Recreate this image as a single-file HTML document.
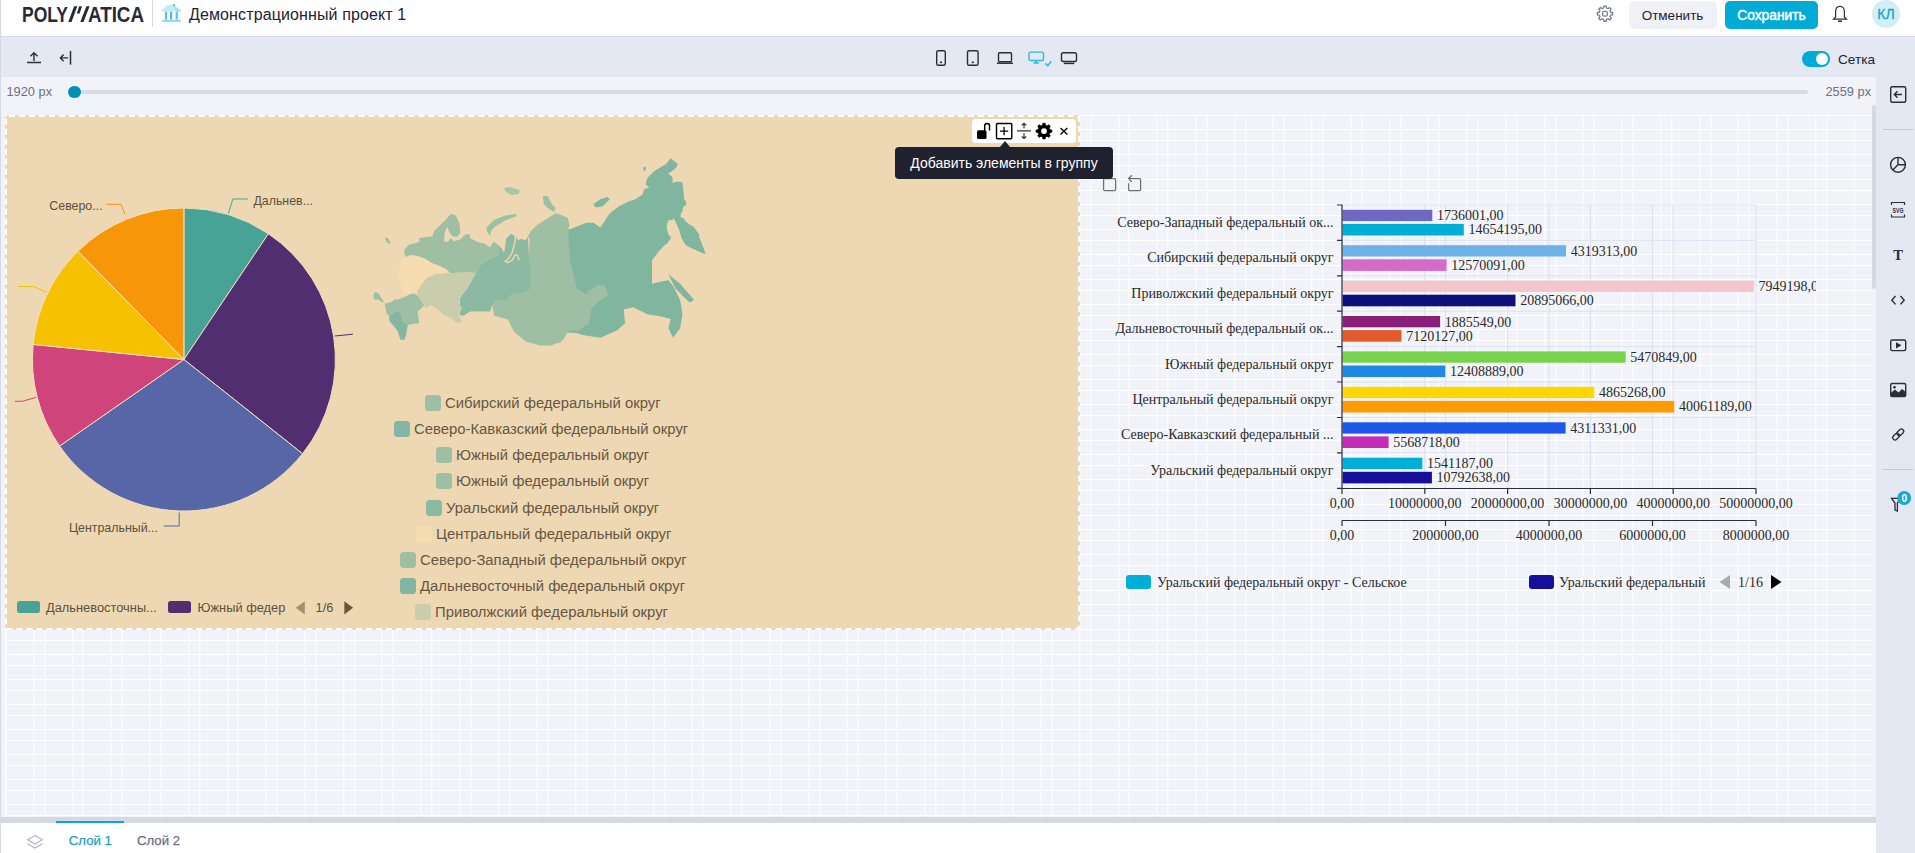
<!DOCTYPE html>
<html><head><meta charset="utf-8">
<style>
*{box-sizing:border-box;margin:0;padding:0}
html,body{width:1915px;height:853px;overflow:hidden;background:#fff;font-family:"Liberation Sans",sans-serif;position:relative}
.a{position:absolute}
#hdr{left:0;top:0;width:1915px;height:37px;background:#fff;border-bottom:1px solid #d6dae8}
#lb{left:0;top:0;width:1px;height:853px;background:#d5d9e6;z-index:50}
#tb{left:0;top:37px;width:1915px;height:40px;background:#e4e8f3}
#sb{left:1876px;top:77px;width:39px;height:776px;background:#e4e8f3}
#rul{left:1px;top:77px;width:1875px;height:38px;background:#f1f3f8}
#cv{left:1px;top:115px;width:1871px;height:702px;background:#f1f3f8}
#grid{left:5px;top:115px;width:1867px;height:702px;
 background-image:repeating-linear-gradient(to bottom,#fff 0,#fff 1px,transparent 1px,transparent 14px,#fff 14px,#fff 15px,transparent 15px,transparent 25px)}
#gridv{left:5px;top:115px;width:1850px;height:702px;background-position:0.35px 0;
 background-image:repeating-linear-gradient(to right,#fff 0,#fff 1px,transparent 1px,transparent 27.8px,#fff 27.8px,#fff 28.8px,transparent 28.8px,transparent 38.74px)}
#hsb{left:1px;top:817px;width:1875px;height:6px;background:#d5d9e6}
#bot{left:1px;top:823px;width:1875px;height:30px;background:#fff}
</style></head><body>
<div id="lb" class="a"></div>
<div id="hdr" class="a">
 <svg class="a" style="left:0;top:0" width="150" height="30" viewBox="0 0 150 30"><g fill="#262a38" font-family="Liberation Sans" font-weight="bold" font-size="21.5"><text x="22" y="22" textLength="46" lengthAdjust="spacingAndGlyphs">POLY</text><text x="88" y="22" textLength="56" lengthAdjust="spacingAndGlyphs">ATICA</text></g><path d="M68.3 22 L74.1 6.3 L77.3 6.3 L71.5 22Z M76.8 13.6 L79.2 6.3 L82 6.3 L79.6 13.6Z M80.3 22 L86.4 6.3 L89.6 6.3 L83.5 22Z" fill="#262a38"/></svg>
 <div class="a" style="left:152px;top:0;width:1px;height:27px;background:#d5d9e6"></div>
 <svg class="a" style="left:156px;top:0px" width="30" height="27" viewBox="0 0 30 27"><path d="M5 10.6 L11 5.5 Q14 4 17 5 L18 4.5 L18.5 5.8 L25 10.4 L24.5 11.5 H5.3Z" fill="#c6ebf5"/><path d="M18.5 5.8 L25 10.4 L24.5 11.5 H20Z" fill="#a3def0"/><rect x="17.2" y="4" width="1.7" height="2.4" fill="#5cc6e2"/><rect x="9" y="11.6" width="1.9" height="8" fill="#4fbfdd"/><rect x="14" y="11.6" width="2.3" height="8" fill="#4fbfdd"/><rect x="19.6" y="11.6" width="2.3" height="8" fill="#5ac8e4"/><rect x="6.2" y="19.8" width="18.6" height="2" fill="#8ad6ea"/></svg>
 <div class="a" style="left:189px;top:6px;font-size:16px;letter-spacing:0.12px;color:#1f2233;white-space:nowrap">Демонстрационный проект 1</div>
 <svg class="a" style="left:1590px;top:0px" width="30" height="30" viewBox="0 0 30 30" fill="none" stroke="#777c96" stroke-width="1.3" stroke-linejoin="round"><path d="M13.57 7.98 L13.80 6.09 L16.20 6.09 L16.43 7.98 L18.04 8.64 L19.53 7.47 L21.23 9.17 L20.06 10.66 L20.72 12.27 L22.61 12.50 L22.61 14.90 L20.72 15.13 L20.06 16.74 L21.23 18.23 L19.53 19.93 L18.04 18.76 L16.43 19.42 L16.20 21.31 L13.80 21.31 L13.57 19.42 L11.96 18.76 L10.47 19.93 L8.77 18.23 L9.94 16.74 L9.28 15.13 L7.39 14.90 L7.39 12.50 L9.28 12.27 L9.94 10.66 L8.77 9.17 L10.47 7.47 L11.96 8.64Z"/><rect x="12.6" y="11.3" width="4.8" height="4.8" rx="1.7"/></svg>
 <div class="a" style="left:1629px;top:1px;width:88px;height:28px;border-radius:5px;background:#eff1f6;color:#1f2233;font-size:13.5px;line-height:30px;height:28px;text-indent:-1px;text-align:center">Отменить</div>
 <div class="a" style="left:1725px;top:1px;width:93px;height:28px;border-radius:5px;background:#00acd6;color:#fff;font-size:13.8px;-webkit-text-stroke:0.45px #fff;line-height:30px;height:28px;text-align:center">Сохранить</div>
 <svg class="a" style="left:1832px;top:5px" width="16" height="18" viewBox="0 0 16 18" fill="none" stroke="#2a2d3a" stroke-width="1.2"><path d="M8 1.3 C4.8 1.3 3.6 4 3.6 7 V12 L1.5 14.2 H14.5 L12.4 12 V7 C12.4 4 11.2 1.3 8 1.3Z"/><path d="M6.6 16.3 H9.4" stroke-width="1.6" stroke-linecap="round"/></svg>
 <div class="a" style="left:1872px;top:0;width:28px;height:28px;border-radius:50%;background:#d4eef6;color:#1aa3cc;font-size:14px;-webkit-text-stroke:0.3px #1aa3cc;line-height:29px;text-align:center">КЛ</div>
</div>
<div id="tb" class="a">
 <svg class="a" style="left:26px;top:13px" width="16" height="15" viewBox="0 0 16 15" fill="none" stroke="#2a2d3a" stroke-width="1.4"><path d="M8 11 V3 M4.5 6.3 L8 2.8 L11.5 6.3"/><path d="M1 12.5 H15" stroke-width="1.5"/></svg>
 <svg class="a" style="left:58px;top:13px" width="15" height="15" viewBox="0 0 15 15" fill="none" stroke="#2a2d3a" stroke-width="1.4"><path d="M10 7.9 H3 M5.6 4.6 L2.4 7.9 L5.6 11.2"/><path d="M12.5 1 V14.6" stroke-width="1.5"/></svg>
 <svg class="a" style="left:930px;top:11px" width="160" height="24" viewBox="0 0 160 24" fill="none" stroke="#2a2d3a" stroke-width="1.4">
  <rect x="6.7" y="2.7" width="8.6" height="14.6" rx="1.6"/><rect x="10" y="13.5" width="2" height="1.6" fill="#2a2d3a" stroke="none"/>
  <rect x="37.5" y="2.7" width="10.6" height="14.6" rx="1.6"/><rect x="41.8" y="13.5" width="2" height="1.6" fill="#2a2d3a" stroke="none"/>
  <rect x="68.5" y="4.7" width="13" height="9" rx="1"/><path d="M67 15.2 H83" stroke-width="1.5"/>
  <g stroke="#2dbbe0"><rect x="99" y="4.1" width="14.5" height="8.4" rx="1.6"/><path d="M103.6 15 H108.9 M106.2 13 V15" stroke-width="1.6"/><path d="M115.2 15.4 L117.8 17.6 L121.2 13.2" stroke-width="1.5"/></g>
  <rect x="131.5" y="4.7" width="15" height="8.8" rx="1.8"/><path d="M133.8 15.4 H144.3" stroke-width="1.5"/>
 </svg>
 <div class="a" style="left:1802px;top:14px;width:28px;height:16px;border-radius:8px;background:#00acd6"><div class="a" style="left:13.5px;top:2px;width:12px;height:12px;border-radius:50%;background:#fff"></div></div>
 <div class="a" style="left:1838px;top:15px;font-size:13.6px;line-height:16px;color:#1f2233">Сетка</div>
</div>
<div id="rul" class="a">
 <div class="a" style="left:5.5px;top:7px;font-size:12.8px;line-height:15px;color:#6b7083">1920 px</div>
 <div class="a" style="left:73px;top:13px;width:1734px;height:3.5px;border-radius:2px;background:#d7dbe7"></div>
 <div class="a" style="left:67px;top:8.5px;width:12.5px;height:12.5px;border-radius:50%;background:#0091b3"></div>
 <div class="a" style="left:1824.5px;top:7px;font-size:12.8px;line-height:15px;color:#6b7083">2559 px</div>
</div>
<div id="cv" class="a"></div><div id="grid" class="a"></div><div id="gridv" class="a"></div>
<div id="sb" class="a">
 <svg class="a" style="left:0;top:0" width="39" height="450" viewBox="1876 77 39 450" fill="none" stroke="#2a2d3a" stroke-width="1.4">
  <rect x="1890.7" y="86.7" width="15" height="15.6" rx="1.5"/><path d="M1902 94.5 H1894.5 M1897.5 91.3 L1894.3 94.5 L1897.5 97.7"/>
  <path d="M1883 129.5 H1913" stroke="#c2c8de" stroke-width="1"/>
  <circle cx="1898" cy="164.8" r="7.4"/><path d="M1898 157.4 V164.8 H1905.4 M1898 164.8 L1892.8 170"/>
  <path d="M1891.5 205 V202.5 H1904.5 V205 M1891.5 214.5 V217 H1904.5 V214.5" stroke-width="1.2"/>
  <text x="1898" y="213.3" font-family="Liberation Sans" font-weight="bold" font-size="7.5" fill="#2a2d3a" stroke="none" text-anchor="middle" textLength="11" lengthAdjust="spacingAndGlyphs">SVG</text>
  <text x="1898.2" y="260" font-family="Liberation Serif" font-weight="bold" font-size="14.5" fill="#2a2d3a" stroke="none" text-anchor="middle">T</text>
  <path d="M1895.5 296 L1891.8 300.2 L1895.5 304.4 M1900.5 296 L1904.2 300.2 L1900.5 304.4"/>
  <rect x="1890.7" y="340" width="15" height="10.6" rx="1.5"/><path d="M1896 342.2 L1901.5 345.3 L1896 348.4Z" fill="#2a2d3a" stroke="none"/>
  <rect x="1890.7" y="383.5" width="15" height="13" rx="1.5"/><path d="M1890.7 393 L1895 389.5 L1898.5 392.5 L1902 389 L1905.7 392 V396.5 H1890.7Z" fill="#2a2d3a" stroke="none"/><circle cx="1894.5" cy="387.2" r="1.3" fill="#2a2d3a" stroke="none"/>
  <g transform="rotate(-45 1898.2 434.5)" stroke-width="1.25"><rect x="1891.4" y="432.2" width="7.6" height="4.6" rx="2.3"/><rect x="1897.4" y="432.2" width="7.6" height="4.6" rx="2.3"/></g>
  <path d="M1883 469.5 H1913" stroke="#c2c8de" stroke-width="1"/>
  <path d="M1891.5 498.3 H1900.8 L1897.4 503 V511 L1895 510 V503Z" stroke-width="1.3"/>
  <circle cx="1904.2" cy="498" r="7" fill="#1aa9d3" stroke="none"/>
  <text x="1904.2" y="501.6" font-family="Liberation Sans" font-weight="bold" font-size="10" fill="#fff" stroke="none" text-anchor="middle">0</text>
 </svg>
</div>
<div class="a" style="left:1872px;top:105px;width:4px;height:184px;border-radius:2px;background:#d5d9e6;z-index:5"></div>
<div class="a" style="left:1872px;top:115px;width:4px;height:702px;background:#f1f3f8;z-index:4"></div>
<div id="el1" class="a" style="left:5px;top:115px;width:1075px;height:515px;background:#eed8b3;border:2px dashed #fff;border-radius:4px;z-index:10"></div>
<svg class="a" style="left:0;top:0;z-index:11" width="1100" height="640" viewBox="0 0 1100 640">
<path d="M183.9 359.5 L183.90 208.00 A151.5 151.5 0 0 1 268.40 233.75Z" fill="#47a396" stroke="#f3e0bd" stroke-width="1"/>
<path d="M183.9 359.5 L268.40 233.75 A151.5 151.5 0 0 1 302.55 453.71Z" fill="#512e6f" stroke="#f3e0bd" stroke-width="1"/>
<path d="M183.9 359.5 L302.55 453.71 A151.5 151.5 0 0 1 59.57 446.07Z" fill="#5766a6" stroke="#f3e0bd" stroke-width="1"/>
<path d="M183.9 359.5 L59.57 446.07 A151.5 151.5 0 0 1 33.15 344.45Z" fill="#ce447b" stroke="#f3e0bd" stroke-width="1"/>
<path d="M183.9 359.5 L33.15 344.45 A151.5 151.5 0 0 1 77.90 251.26Z" fill="#f5c100" stroke="#f3e0bd" stroke-width="1"/>
<path d="M183.9 359.5 L77.90 251.26 A151.5 151.5 0 0 1 183.90 208.00Z" fill="#f79608" stroke="#f3e0bd" stroke-width="1"/>
<g fill="none" stroke-width="1">
<path d="M228.4 213.5 L232.8 199 H247.8" stroke="#47a396"/>
<path d="M125 214.5 L121 204.3 H106.3" stroke="#f79608"/>
<path d="M46.9 292.5 L33.8 286.5 H18.4" stroke="#f5c100"/>
<path d="M36 397.4 L22.4 401.3 H15" stroke="#ce447b"/>
<path d="M179.2 512.5 V526 H163.7" stroke="#5766a6"/>
<path d="M334.8 336 L352.9 334.2" stroke="#512e6f"/>
</g>
<g font-family="Liberation Sans" font-size="12.4" fill="#5b5040">
<text x="253.4" y="205.3">Дальнев...</text>
<text x="49.3" y="209.8">Северо...</text>
<text x="68.9" y="532">Центральный...</text>
</g>
<rect x="17" y="601" width="23" height="12" rx="2.5" fill="#47a396"/>
<rect x="168" y="601" width="23" height="12" rx="2.5" fill="#512e6f"/>
<g font-family="Liberation Sans" font-size="12.85" fill="#5b5040">
<text x="46" y="611.8">Дальневосточны...</text>
<text x="197.5" y="611.8">Южный федер</text>
<text x="315.5" y="611.8">1/6</text>
</g>
<!--MAP--><g><polygon points="527.8,235.8 535.8,227.9 543.8,223.9 553.7,215.9 558.7,213.9 567.7,217.9 569.7,225.9 563.7,233.8 569.7,231.9 573.7,237.8 571.7,249.8 573.7,263.8 581.7,273.7 585.6,291.7 595.6,287.7 600.0,283.7 600.0,303.7 589.6,305.6 587.6,319.6 581.7,333.6 571.7,329.6 567.7,327.6 563.7,339.6 551.7,345.5 539.8,345.5 525.8,341.5 513.8,331.6 507.9,319.6 493.9,315.6 491.9,301.7 497.9,299.7 505.9,297.7 513.8,293.7 523.8,293.7 529.8,289.7 530.8,269.7 528.8,255.8 529.8,239.8" fill="#9ebfa3"/>
<polygon points="530.0,232.1 537.0,225.1 555.8,213.3 567.5,218.0 568.7,229.8 573.4,234.4 569.9,250.9 573.4,274.3 576.9,288.4 586.3,294.3 596.9,282.5 607.4,283.7 610.9,299.0 591.0,309.5 588.6,323.6 579.3,333.0 567.5,333.0 560.5,342.4 548.8,344.7 537.0,342.4 530.0,337.7" fill="#9ebfa3"/>
<polygon points="542.8,196.0 547.8,196.0 551.7,203.9 555.7,207.9 553.7,211.9 547.8,207.9 543.8,203.9" fill="#9ebfa3"/>
<polygon points="503.9,188.0 509.9,187.0 519.8,190.0 518.8,194.0 511.9,195.0 505.9,192.0" fill="#a9c4a6"/>
<polygon points="568.7,229.8 586.3,222.7 593.3,222.7 600.4,227.4 609.8,213.3 619.1,206.3 628.5,201.6 635.6,199.3 642.6,194.6 647.3,178.1 654.3,171.1 666.1,164.1 670.7,158.2 677.8,164.1 675.4,173.5 682.5,182.8 684.8,204.0 680.1,211.0 675.4,211.5 681.3,218.0 687.2,222.7 694.7,228.6 698.4,234.9 701.7,243.8 705.5,253.7 698.4,251.3 689.5,245.0 682.0,237.3 678.3,227.9 675.0,220.4 670.7,215.7 667.2,222.7 666.1,229.8 670.7,239.1 659.0,250.9 652.0,260.3 652.0,283.7 661.4,281.4 668.4,280.2 673.1,286.1 680.1,300.1 682.5,314.2 680.1,328.3 673.1,337.7 668.4,328.3 670.7,318.9 661.4,316.5 647.3,314.2 633.2,307.2 623.8,309.5 625.0,323.6 616.8,330.6 600.4,337.7 584.0,335.3 567.5,330.6 579.3,330.6 588.6,323.6 591.0,309.5 600.4,300.1 608.6,295.4 605.1,286.1 598.0,284.9 588.6,290.7 586.3,294.3 576.9,288.4 573.4,274.3 569.9,260.3 568.7,243.8" fill="#80b59f"/>
<polygon points="668.4,274.3 680.1,283.7 694.2,300.1 689.5,302.5 675.4,288.4" fill="#80b59f"/>
<polygon points="643.8,166.4 646.1,167.6 644.9,171.1 643.1,169.9" fill="#80b59f"/>
<polygon points="593.3,204.0 600.4,199.3 607.4,196.9 609.8,199.3 602.7,206.3 595.7,207.5" fill="#80b59f"/>
<polygon points="460.0,299.7 462.0,295.7 468.0,283.7 476.0,275.7 479.9,265.8 489.9,259.8 499.9,256.8 529.8,289.7 523.8,293.7 513.8,293.7 505.9,297.7 497.9,299.7 493.9,301.7 489.9,311.6 479.9,311.6 470.0,311.6 464.0,315.6 460.0,315.6" fill="#8cb9a1"/>
<polygon points="460.0,300.0 460.0,295.0 462.8,295.0 469.4,283.8 474.1,276.3 478.8,267.8 484.4,261.3 491.0,258.0 497.5,255.2 499.4,251.0 497.5,244.6 501.3,248.1 504.1,252.8 505.0,248.1 506.0,238.8 510.7,234.1 515.3,235.9 518.2,240.6 521.0,238.8 525.7,240.6 528.0,236.4 528.9,255.6 531.0,269.7 530.0,289.7 510.7,293.2 506.9,300.0" fill="#8cb9a1"/>
<path d="M515.5 235.5 L514.4 244.4 L512.1 252.8 L508.3 258.9 L505.0 261.3 L507.8 262.7 L512.5 259.9 L515.3 254.7 L517.7 255.6 L519.1 260.3" fill="none" stroke="#eed8b3" stroke-width="1.4" stroke-linejoin="round"/>
<polygon points="404.5,249.4 409.4,244.5 419.3,242.0 419.3,237.9 432.4,236.3 434.0,231.3 440.6,224.8 447.2,218.2 450.5,214.1 455.4,214.9 459.5,223.1 460.3,233.0 457.0,237.1 452.1,236.3 448.8,231.3 447.2,226.4 444.7,233.0 443.9,241.2 448.0,242.0 450.5,237.9 453.7,241.2 460.3,239.6 465.2,234.6 470.0,234.6 470.0,272.4 460.3,272.4 450.5,273.2 447.2,269.9 439.0,265.8 432.4,263.4 425.8,259.3 417.6,256.0 409.4,255.2 406.9,257.6 404.5,254.3" fill="#9ebfa3"/>
<polygon points="460.0,241.6 464.7,238.8 466.6,234.1 469.4,237.8 478.8,242.5 484.4,243.5 490.0,247.2 493.8,241.6 497.5,244.6 499.4,251.0 497.5,255.2 491.0,258.0 484.4,261.3 478.8,267.8 474.1,275.3 460.0,272.5 460.0,257.5" fill="#9ebfa3"/>
<polygon points="486.3,227.5 491.0,224.7 495.6,221.9 503.2,220.0 504.6,220.5 497.5,224.7 491.9,229.4 490.0,235.0 491.4,237.4 487.2,232.2" fill="#9ebfa3"/>
<polygon points="485.9,227.9 493.9,219.9 503.9,215.9 515.8,213.9 516.8,215.9 505.9,219.9 495.9,225.9" fill="#9ebfa3"/>
<polygon points="384.8,238.7 386.4,237.1 388.9,239.6 390.5,242.8 388.1,243.7" fill="#9ebfa3"/>
<polygon points="417.6,290.5 421.7,283.9 427.5,277.3 435.7,274.0 445.5,273.2 450.5,273.2 460.3,272.4 470.0,272.1 475.9,273.2 468.5,287.2 462.0,295.4 458.7,302.0 462.0,308.5 458.7,315.1 462.0,321.7 457.0,323.3 452.1,318.4 443.9,315.1 439.0,310.2 430.8,305.2 425.8,308.5 424.2,305.2 417.6,295.4" fill="#c9cdab"/>
<polygon points="404.5,258.4 409.4,255.2 417.6,256.0 425.8,259.3 432.4,263.4 439.0,265.8 447.2,269.9 445.5,273.2 435.7,274.0 427.5,277.3 421.7,283.9 417.6,290.5 411.1,293.7 407.8,295.4 403.7,292.1 400.4,285.5 398.7,279.0 399.6,272.4 397.1,269.9 401.2,265.8 402.8,260.9" fill="#f6dcb1"/>
<polygon points="384.8,303.6 391.3,302.0 394.6,299.5 397.9,299.5 404.5,297.0 411.1,293.7 414.3,293.7 417.6,295.4 424.2,305.2 420.9,308.5 417.6,311.8 419.3,323.3 412.7,324.1 407.8,324.9 402.8,321.7 400.4,311.8 394.6,311.8 389.7,316.7 386.4,313.4" fill="#9ebfa3"/>
<polygon points="373.3,295.4 374.9,292.1 378.2,292.9 380.7,297.0 384.0,302.0 381.5,302.0 378.2,299.5 374.1,299.5" fill="#9ebfa3"/>
<polygon points="388.9,317.6 394.6,311.8 400.4,311.8 402.8,321.7 407.8,324.9 406.1,334.8 404.5,339.7 400.4,339.7 397.9,331.5 393.0,324.9 389.7,321.7" fill="#84b6a1"/>
<polygon points="650.0,200.0 685.2,200.0 686.6,204.2 683.1,207.0 682.4,212.0 681.0,212.7 680.3,217.6 683.8,218.3 685.2,221.1 688.0,223.9 693.6,226.7 699.3,234.5 698.6,239.4 701.4,242.2 700.7,245.0 703.5,247.9 704.9,254.2 699.3,251.4 692.2,248.6 686.6,245.7 683.8,242.2 681.0,236.6 679.6,229.6 677.4,221.1 675.3,215.5 673.2,212.7 670.4,209.9 669.7,212.0 673.2,214.8 672.5,220.4 669.0,219.7 666.2,225.3 668.3,235.2 671.1,236.6 668.3,240.8 667.6,243.6 662.0,245.0 654.2,253.5 652.1,260.0 650.0,260.0" fill="#80b59f"/>
<polygon points="668.1,173.4 672.2,177.0 672.8,180.7 671.6,183.1 676.3,181.7 683.9,181.9 692.7,179.3 692.7,166.4 678.0,164.7 676.3,167.6 672.8,170.5" fill="#eed8b3"/>
<polygon points="645.2,184.2 649.3,187.3 644.0,189.3 643.4,186.3" fill="#eed8b3"/></g><!--/MAP-->
<g font-family="Liberation Sans" font-size="14.85" fill="#665643"><rect x="425" y="395" width="16" height="16" rx="3.5" fill="#9ebfa3"/><text x="445" y="408.2">Сибирский федеральный округ</text><rect x="394" y="421" width="16" height="16" rx="3.5" fill="#84b6a1"/><text x="414" y="434.2">Северо-Кавказский федеральный округ</text><rect x="436" y="447" width="16" height="16" rx="3.5" fill="#9ebfa3"/><text x="456" y="460.2">Южный федеральный округ</text><rect x="436" y="473" width="16" height="16" rx="3.5" fill="#9ebfa3"/><text x="456" y="486.2">Южный федеральный округ</text><rect x="426" y="500" width="16" height="16" rx="3.5" fill="#8cb9a1"/><text x="446" y="513.2">Уральский федеральный округ</text><rect x="416" y="526" width="16" height="16" rx="3.5" fill="#f6dcb1"/><text x="436" y="539.2">Центральный федеральный округ</text><rect x="400" y="552" width="16" height="16" rx="3.5" fill="#9ebfa3"/><text x="420" y="565.2">Северо-Западный федеральный округ</text><rect x="400" y="578" width="16" height="16" rx="3.5" fill="#80b59f"/><text x="420" y="591.2">Дальневосточный федеральный округ</text><rect x="415" y="604" width="16" height="16" rx="3.5" fill="#c9cdab"/><text x="435" y="617.2">Приволжский федеральный округ</text></g>
<path d="M304.8 601.3 V614.4 L295.8 607.85Z" fill="#a48e6d"/>
<path d="M344.3 601.3 V614.4 L353.1 607.85Z" fill="#6b563a"/>
</svg>
<div class="a" style="left:972px;top:119px;width:104px;height:24px;background:#fff;border-radius:4px;z-index:20">
<svg class="a" style="left:0;top:0" width="104" height="24" viewBox="972 119 104 24">
 <path d="M984.7 131 V125.8 a2.4 2.4 0 0 1 4.8 0 V130.4" fill="none" stroke="#000" stroke-width="1.5"/>
 <rect x="977" y="130.3" width="9.5" height="8.7" rx="1.6" fill="#000"/>
 <rect x="996.5" y="123.5" width="15.3" height="15.3" rx="1" fill="none" stroke="#000" stroke-width="1.4"/>
 <path d="M1004.1 127 V135.3 M1000 131.2 H1008.2" stroke="#000" stroke-width="1.3"/>
 <path d="M1017 130.8 H1031 M1024 123.3 V128.3 M1024 133.3 V138.5 M1021.8 125.3 L1024 123.3 L1026.2 125.3 M1021.8 136.5 L1024 138.5 L1026.2 136.5" fill="none" stroke="#333" stroke-width="1.2"/>
 <path d="M1042.55 125.28 L1042.90 123.28 L1045.10 123.28 L1045.45 125.28 L1047.09 125.96 L1048.75 124.79 L1050.31 126.35 L1049.14 128.01 L1049.82 129.65 L1051.82 130.00 L1051.82 132.20 L1049.82 132.55 L1049.14 134.19 L1050.31 135.85 L1048.75 137.41 L1047.09 136.24 L1045.45 136.92 L1045.10 138.92 L1042.90 138.92 L1042.55 136.92 L1040.91 136.24 L1039.25 137.41 L1037.69 135.85 L1038.86 134.19 L1038.18 132.55 L1036.18 132.20 L1036.18 130.00 L1038.18 129.65 L1038.86 128.01 L1037.69 126.35 L1039.25 124.79 L1040.91 125.96Z" fill="#000" stroke="#000" stroke-width="0.8" stroke-linejoin="round"/><circle cx="1044" cy="131.1" r="2.9" fill="#fff"/>
 <path d="M1060.5 128 L1067.3 134.5 M1067.3 128 L1060.5 134.5" stroke="#000" stroke-width="1.3"/>
</svg></div>
<div class="a" style="left:1000px;top:141px;width:0;height:0;border-left:5px solid transparent;border-right:5px solid transparent;border-bottom:6px solid #1f212e;z-index:21"></div>
<div class="a" style="left:895px;top:147px;width:218px;height:32px;background:#1f212e;border-radius:4px;color:#fff;font-size:14px;line-height:32px;text-align:center;z-index:21;white-space:nowrap">Добавить элементы в группу</div>
<!--BARS--><svg class="a" style="left:0;top:0;z-index:9" width="1915" height="853" viewBox="0 0 1915 853">
<path d="M1424.8 205.0 V488 M1507.6 205.0 V488 M1590.4 205.0 V488 M1673.2 205.0 V488 M1756.0 205.0 V488 M1445.5 205.0 V488 M1549.0 205.0 V488 M1652.5 205.0 V488 M1342.0 205.0 H1756.0 M1342.0 240.4 H1756.0 M1342.0 275.8 H1756.0 M1342.0 311.2 H1756.0 M1342.0 346.6 H1756.0 M1342.0 382.0 H1756.0 M1342.0 417.5 H1756.0 M1342.0 452.9 H1756.0" stroke="#dbe2ef" stroke-width="1" fill="none"/>
<rect x="1342.5" y="209.8" width="89.8" height="11.3" fill="#6e68c2"/>
<rect x="1342.5" y="223.9" width="121.3" height="11.6" fill="#00afd6"/>
<rect x="1342.5" y="245.2" width="223.5" height="11.3" fill="#6bb2e8"/>
<rect x="1342.5" y="259.3" width="104.1" height="11.6" fill="#d46bc9"/>
<rect x="1342.5" y="280.6" width="411.4" height="11.3" fill="#f5c5ce"/>
<rect x="1342.5" y="294.7" width="173.0" height="11.6" fill="#10107a"/>
<rect x="1342.5" y="316.0" width="97.6" height="11.3" fill="#8a1f7b"/>
<rect x="1342.5" y="330.1" width="59.0" height="11.6" fill="#e35b2b"/>
<rect x="1342.5" y="351.4" width="283.1" height="11.3" fill="#77d34b"/>
<rect x="1342.5" y="365.5" width="102.7" height="11.6" fill="#1f88e2"/>
<rect x="1342.5" y="386.8" width="251.8" height="11.3" fill="#ffd600"/>
<rect x="1342.5" y="400.9" width="331.7" height="11.6" fill="#ff9a00"/>
<rect x="1342.5" y="422.3" width="223.1" height="11.3" fill="#1b57e8"/>
<rect x="1342.5" y="436.4" width="46.1" height="11.6" fill="#c62bb7"/>
<rect x="1342.5" y="457.7" width="79.8" height="11.3" fill="#00afd6"/>
<rect x="1342.5" y="471.8" width="89.4" height="11.6" fill="#150f9c"/>
<defs><clipPath id="bc"><rect x="1000" y="150" width="816" height="500"/></clipPath></defs><g font-family="Liberation Serif" font-size="14" fill="#2a2a2a" clip-path="url(#bc)">
<text x="1437.0" y="220.3">1736001,00</text>
<text x="1468.5" y="234.3">14654195,00</text>
<text x="1570.7" y="255.7">4319313,00</text>
<text x="1451.3" y="269.7">12570091,00</text>
<text x="1758.6" y="291.1">7949198,00</text>
<text x="1520.2" y="305.1">20895066,00</text>
<text x="1444.8" y="326.5">1885549,00</text>
<text x="1406.2" y="340.5">7120127,00</text>
<text x="1630.3" y="361.9">5470849,00</text>
<text x="1449.9" y="375.9">12408889,00</text>
<text x="1599.0" y="397.3">4865268,00</text>
<text x="1678.9" y="411.3">40061189,00</text>
<text x="1570.3" y="432.8">4311331,00</text>
<text x="1393.3" y="446.8">5568718,00</text>
<text x="1427.0" y="468.2">1541187,00</text>
<text x="1436.6" y="482.2">10792638,00</text>
<text x="1333.5" y="226.9" text-anchor="end">Северо-Западный федеральный ок...</text>
<text x="1333.5" y="262.3" text-anchor="end">Сибирский федеральный округ</text>
<text x="1333.5" y="297.7" text-anchor="end">Приволжский федеральный округ</text>
<text x="1333.5" y="333.1" text-anchor="end">Дальневосточный федеральный ок...</text>
<text x="1333.5" y="368.5" text-anchor="end">Южный федеральный округ</text>
<text x="1333.5" y="404.0" text-anchor="end">Центральный федеральный округ</text>
<text x="1333.5" y="439.4" text-anchor="end">Северо-Кавказский федеральный ...</text>
<text x="1333.5" y="474.8" text-anchor="end">Уральский федеральный округ</text>
<text x="1342.0" y="508" text-anchor="middle">0,00</text>
<text x="1424.8" y="508" text-anchor="middle">10000000,00</text>
<text x="1507.6" y="508" text-anchor="middle">20000000,00</text>
<text x="1590.4" y="508" text-anchor="middle">30000000,00</text>
<text x="1673.2" y="508" text-anchor="middle">40000000,00</text>
<text x="1756.0" y="508" text-anchor="middle">50000000,00</text>
<text x="1342.0" y="540" text-anchor="middle">0,00</text>
<text x="1445.5" y="540" text-anchor="middle">2000000,00</text>
<text x="1549.0" y="540" text-anchor="middle">4000000,00</text>
<text x="1652.5" y="540" text-anchor="middle">6000000,00</text>
<text x="1756.0" y="540" text-anchor="middle">8000000,00</text>
</g>
<path d="M1342.0 204.5 V488.5 M1337 205.0 H1342.0 M1337 240.4 H1342.0 M1337 275.8 H1342.0 M1337 311.2 H1342.0 M1337 346.6 H1342.0 M1337 382.0 H1342.0 M1337 417.5 H1342.0 M1337 452.9 H1342.0 M1337 488.3 H1342.0 M1342.0 488.5 H1756.0 M1342.0 488.5 V494 M1424.8 488.5 V494 M1507.6 488.5 V494 M1590.4 488.5 V494 M1673.2 488.5 V494 M1756.0 488.5 V494 M1342.0 520.5 H1756.0 M1342.0 520.5 V526 M1445.5 520.5 V526 M1549.0 520.5 V526 M1652.5 520.5 V526 M1756.0 520.5 V526" stroke="#2a2e3a" stroke-width="1.2" fill="none"/>
<rect x="1126" y="575" width="25" height="14" rx="3" fill="#00afd6"/>
<rect x="1529" y="575" width="25" height="14" rx="3" fill="#150f9c"/>
<g font-family="Liberation Serif" font-size="14" fill="#2a2a2a"><text x="1157" y="587">Уральский федеральный округ - Сельское</text><text x="1559" y="587">Уральский федеральный</text><text x="1738" y="587">1/16</text></g>
<path d="M1730 575 V589 L1719.5 582Z" fill="#aaaaaa"/><path d="M1771 575 V589 L1781.5 582Z" fill="#000"/>
<g fill="none" stroke="#707070" stroke-width="1.25"><rect x="1103.6" y="178.7" width="12" height="11.9" rx="1.2"/><path d="M1128.6 183.3 V189.5 Q1128.6 190.6 1129.7 190.6 H1139.5 Q1140.6 190.6 1140.6 189.5 V179.7 Q1140.6 178.6 1139.5 178.6 H1128.8 M1131.8 175.3 L1128.6 178.6 L1131.8 181.9"/></g>
</svg><!--/BARS-->
<div id="hsb" class="a"></div>
<div id="bot" class="a">
 <svg class="a" style="left:25px;top:11px" width="18" height="16" viewBox="0 0 18 16" fill="none" stroke="#aeb2cb" stroke-width="1.1"><path d="M9 1.6 L16.4 5.8 L9 10 L1.6 5.8Z"/><path d="M1.6 9.8 L9 14 L16.4 9.8"/></svg>
 <div class="a" style="left:67.8px;top:10px;font-size:13.2px;line-height:16px;color:#1a9fc4;-webkit-text-stroke:0.25px #1a9fc4">Слой 1</div>
 <div class="a" style="left:136px;top:10px;font-size:13.2px;line-height:16px;color:#6b6f85;-webkit-text-stroke:0.25px #6b6f85">Слой 2</div>
</div>
<div class="a" style="left:56px;top:821px;width:68px;height:2px;background:#00acd6;z-index:6"></div>
</body></html>
